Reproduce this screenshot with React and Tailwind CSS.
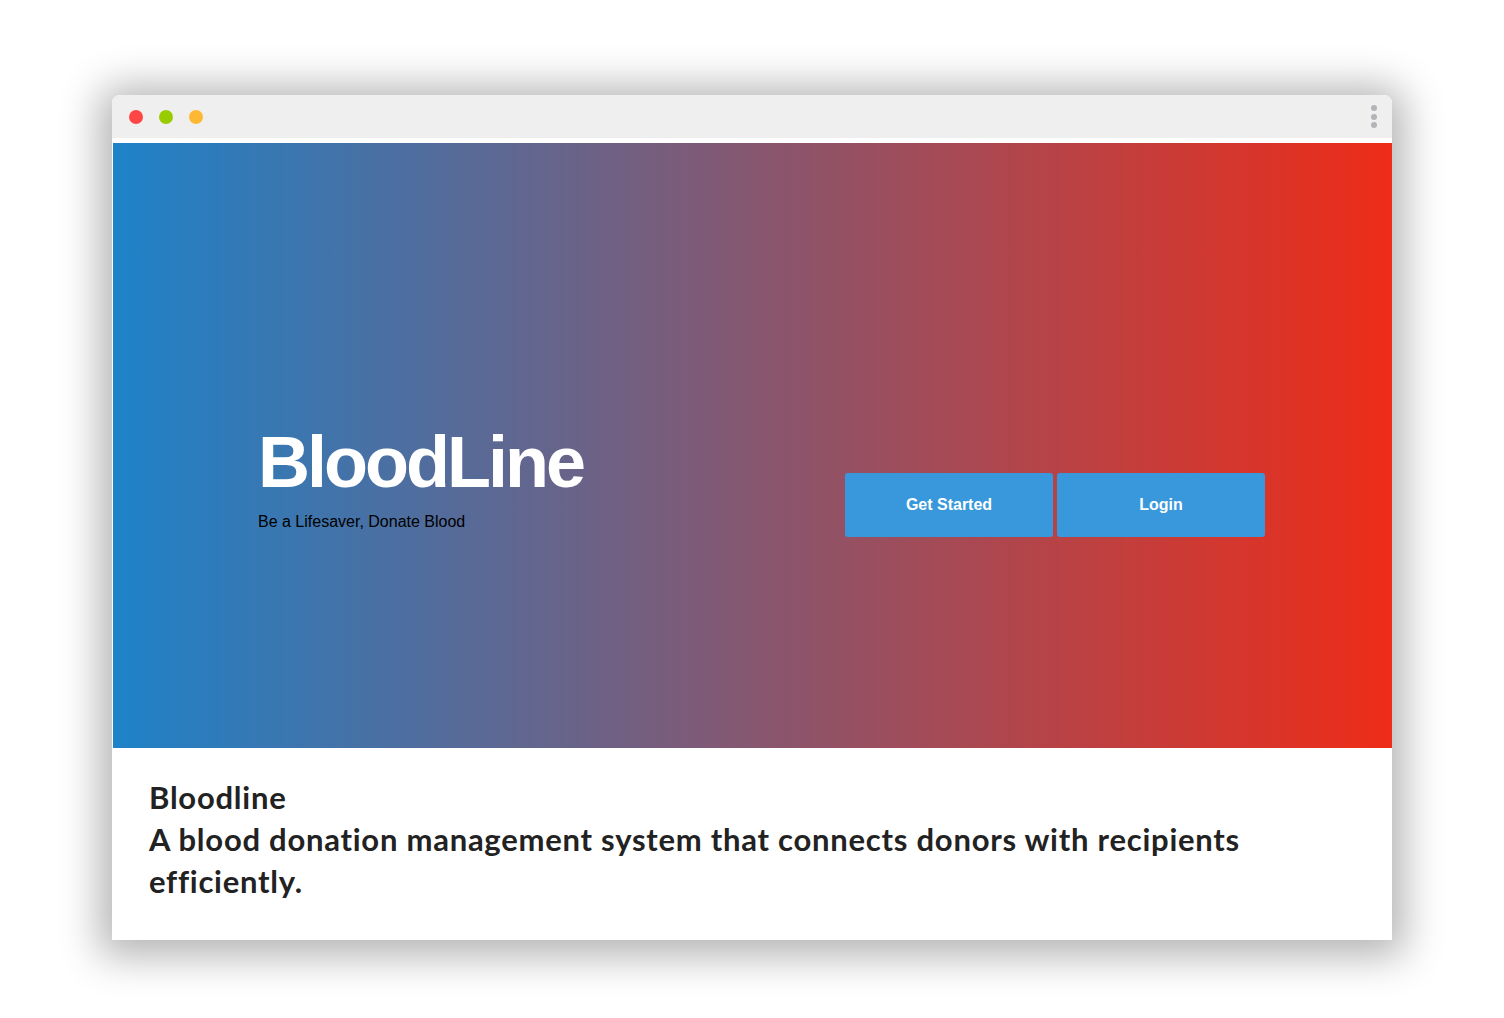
import React from 'react';

const arial = { fontFamily: '"Liberation Sans", Arial, sans-serif' };

export default function App() {
  return (
    <div className="w-[1504px] h-[1018px] bg-white pt-[95px] pl-[112px]">
      {/* Ventana del navegador */}
      <div className="w-[1280px] h-[845px] bg-white rounded-t-[8px] shadow-[0_4px_40px_12px_rgba(0,0,0,0.3)] flex flex-col overflow-hidden">
        {/* Barra de título */}
        <div className="h-[43px] bg-[#efefef] flex items-center justify-between pl-[17px] pr-[15px]">
          <div className="flex items-center gap-4">
            <span className="w-[14px] h-[14px] rounded-full bg-[#ff4646]" />
            <span className="w-[14px] h-[14px] rounded-full bg-[#99cc00]" />
            <span className="w-[14px] h-[14px] rounded-full bg-[#ffb833]" />
          </div>
          <div className="flex flex-col gap-[2.5px]">
            <span className="w-[6px] h-[6px] rounded-full bg-[#b4b4b8]" />
            <span className="w-[6px] h-[6px] rounded-full bg-[#b4b4b8]" />
            <span className="w-[6px] h-[6px] rounded-full bg-[#b4b4b8]" />
          </div>
        </div>

        {/* Hero */}
        <div className="mt-[5px] ml-[1px] h-[605px] bg-[linear-gradient(to_right,#1e82c8,#ee2c18)] flex items-start justify-between pl-[145px] pr-[127px] pt-[283px]" style={arial}>
          <div>
            <h1 className="text-[72px] font-bold leading-none text-white tracking-[-3px]">BloodLine</h1>
            <p className="mt-[12px] text-[16px] text-black">Be a Lifesaver, Donate Blood</p>
          </div>
          <div className="flex gap-[4px] mt-[47px]">
            <button className="w-[208px] h-[64px] bg-[#3898db] rounded-[3px] text-white font-bold text-[16px]">Get Started</button>
            <button className="w-[208px] h-[64px] bg-[#3898db] rounded-[3px] text-white font-bold text-[16px]">Login</button>
          </div>
        </div>

        {/* Descripción */}
        <div className="px-[37px] pt-[28px] text-[#222] font-bold text-[31px] leading-[42px] tracking-[0.75px]" style={{ fontFamily: 'Lato, "Open Sans", sans-serif' }}>
          <h2>Bloodline</h2>
          <p>A blood donation management system that connects donors with recipients efficiently.</p>
        </div>
      </div>
    </div>
  );
}
